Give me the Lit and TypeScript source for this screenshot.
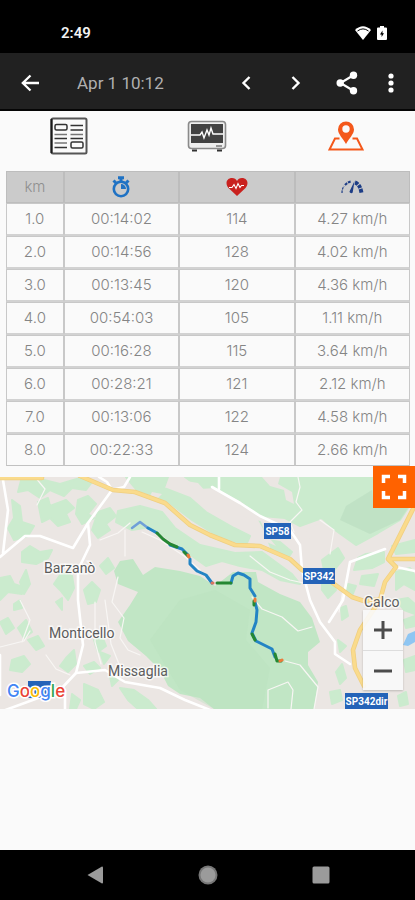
import { LitElement, html, svg, css } from "lit";
import { customElement } from "lit/decorators.js";

const splits = [
  ["1.0", "00:14:02", "114", "4.27 km/h"],
  ["2.0", "00:14:56", "128", "4.02 km/h"],
  ["3.0", "00:13:45", "120", "4.36 km/h"],
  ["4.0", "00:54:03", "105", "1.11 km/h"],
  ["5.0", "00:16:28", "115", "3.64 km/h"],
  ["6.0", "00:28:21", "121", "2.12 km/h"],
  ["7.0", "00:13:06", "122", "4.58 km/h"],
  ["8.0", "00:22:33", "124", "2.66 km/h"],
];

@customElement("status-bar")
class StatusBar extends LitElement {
  static styles = css`
    :host {
      display: flex;
      align-items: center;
      justify-content: space-between;
      box-sizing: border-box;
      height: 53px;
      padding: 12px 28px 0 61px;
      background: #000;
      color: #f2f2f2;
      font: 600 15px/20px Roboto, sans-serif;
    }
    .icons { display: flex; align-items: center; gap: 6px; }
    svg { display: block; }
  `;
  render() {
    return html`
      <span>2:49</span>
      <span class="icons">
        <svg width="16" height="14" viewBox="0 0 16 14">
          <path d="M8 14 0 4Q8-3.500 16 4z" fill="#fff" />
          <path d="M2.500 5Q8 .8 13.500 5" fill="none" stroke="#000" stroke-width="1" />
        </svg>
        <svg width="10" height="14" viewBox="0 0 10 14">
          <path d="M3 0h4v1.500h2a1 1 0 0 1 1 1V13a1 1 0 0 1-1 1H1a1 1 0 0 1-1-1V2.500a1 1 0 0 1 1-1h2z" fill="#fff" />
          <path d="M5.500 4.500 3 8.500h1.600V11L7 7.200H5.500z" fill="#000" />
        </svg>
      </span>
    `;
  }
}

@customElement("tool-bar")
class ToolBar extends LitElement {
  static styles = css`
    :host {
      display: flex;
      align-items: center;
      box-sizing: border-box;
      height: 58px;
      padding: 0 6px;
      background: #212121;
      border-bottom: 2px solid #050505;
    }
    h1 {
      flex: 1;
      margin: 3px 0 0 24px;
      color: #b0b0b0;
      font: 400 17px/24px Roboto, sans-serif;
      white-space: nowrap;
    }
    button {
      display: grid;
      place-items: center;
      width: 50px;
      height: 50px;
      padding: 3px 0 0;
      border: 0;
      background: none;
    }
    .back { width: 47px; }
    .share { width: 52px; }
    .more { width: 36px; }
    svg { display: block; fill: none; stroke: #fff; stroke-width: 2; }
    .solid { fill: #fff; }
  `;
  render() {
    return html`
      <button class="back" aria-label="Back">
        <svg width="18" height="18" viewBox="0 0 18 18"><path d="M18 9H2M9.500 1.500 1.800 9l7.700 7.500" stroke-width="2.300" /></svg>
      </button>
      <h1>Apr 1 10:12</h1>
      <button aria-label="Previous">
        <svg width="10" height="14" viewBox="0 0 10 14"><path d="M8.500 1 2.500 7l6 6" stroke-width="2.400" /></svg>
      </button>
      <button aria-label="Next">
        <svg width="10" height="14" viewBox="0 0 10 14"><path d="M1.500 1l6 6-6 6" stroke-width="2.400" /></svg>
      </button>
      <button class="share" aria-label="Share">
        <svg width="22" height="24" viewBox="0 0 22 24">
          <path d="M17 4.500 4.500 12 17 19.500" stroke-width="2.200" />
          <g class="solid" stroke="none"><circle cx="17.500" cy="4.200" r="3.700" /><circle cx="4.200" cy="12" r="3.700" /><circle cx="17.500" cy="19.800" r="3.700" /></g>
        </svg>
      </button>
      <button class="more" aria-label="More options">
        <svg width="6" height="20" viewBox="0 0 6 20">
          <g class="solid" stroke="none"><circle cx="3" cy="3" r="2.600" /><circle cx="3" cy="10" r="2.600" /><circle cx="3" cy="17" r="2.600" /></g>
        </svg>
      </button>
    `;
  }
}

@customElement("view-tabs")
class ViewTabs extends LitElement {
  static styles = css`
    :host {
      display: grid;
      grid-template-columns: repeat(3, 1fr);
      height: 60px;
    }
    button {
      display: grid;
      place-items: start center;
      padding: 6px 0 0;
      border: 0;
      background: none;
    }
    svg { display: block; }
  `;
  render() {
    return html`
      <button aria-label="Summary">
        <svg width="38" height="38" viewBox="0 0 38 38" fill="none" stroke="#333">
          <rect x="1.500" y="1.500" width="35" height="35" rx="1.500" stroke="#555" stroke-width="2" />
          <path d="M1.500 2v34" stroke="#1a1a1a" stroke-width="2" />
          <rect x="5" y="7.500" width="12" height="5.500" rx="1.500" stroke-width="1.500" />
          <rect x="21" y="25" width="12" height="6" rx="1.500" stroke-width="1.500" />
          <path d="M20.500 8.500h12.500M20.500 13h12.500M4.500 21.500H17M20.500 21.500H33M4.500 30.500H17" stroke-width="1.400" />
          <path d="M4.500 17.500H17M20.500 17.500H33M4.500 26H17" stroke="#777" stroke-width="1.400" />
        </svg>
      </button>
      <button aria-label="Heart rate chart">
        <svg width="40" height="38" viewBox="0 0 40 38">
          <rect x="1.500" y="4.500" width="37" height="27" rx="3" fill="#eee" stroke="#8a8a8a" stroke-width="1.600" />
          <rect x="4" y="7" width="32" height="19" fill="#424242" />
          <path d="M4 18h9l2-3 2 6 3-8 2 5 2-7 2 6h10" fill="none" stroke="#fff" stroke-width="1.400" />
          <path d="M5 32.500h5v2H5zM30 32.500h5v2h-5z" fill="#333" />
          <path d="M29 29h6" stroke="#777" stroke-width="1.500" />
        </svg>
      </button>
      <button aria-label="Map">
        <svg width="38" height="38" viewBox="0 0 38 38" fill="none" stroke="#f4581b">
          <path d="M12.500 21.500H8L2.500 32.500h33L30 21.500h-4.500" stroke-width="2" />
          <path d="M19 27C16 21.500 11 17 11 12.500a8 8 0 0 1 16 0C27 17 22 21.500 19 27z" fill="#f4581b" stroke="none" />
          <circle cx="19" cy="12" r="3.700" fill="#fafafa" stroke="none" />
        </svg>
      </button>
    `;
  }
}

@customElement("split-table")
class SplitTable extends LitElement {
  static styles = css`
    :host { display: block; padding: 0 5px 0 6px; }
    table {
      width: 100%;
      table-layout: fixed;
      border-collapse: separate;
      border-spacing: 0;
      color: #858585;
      font: 300 15px/20px Inter, sans-serif;
      text-align: center;
    }
    col:first-child { width: 14.300%; }
    th, td {
      box-sizing: border-box;
      padding: 0;
      border: 1px solid #c8c8c8;
      font-weight: 300;
    }
    th { height: 32px; padding: 0; background: #cbcbcb; color: #8f8f8f; border-color: #bdbdbd; }
    td { height: 33px; border-bottom: 2px solid #d2d2d2; }
    tr:last-child td { height: 32px; border-bottom: 1px solid #c1c1c1; }
    svg { display: block; margin: 0 auto; }
  `;
  render() {
    return html`
      <table>
        <colgroup><col /><col /><col /><col /></colgroup>
        <thead>
          <tr>
            <th scope="col">km</th>
            <th scope="col" aria-label="Time">
              <svg width="20" height="22" viewBox="0 0 20 22" fill="none" stroke="#1f72c4">
                <circle cx="10" cy="13" r="7.200" stroke-width="2.600" />
                <path d="M7 1.800h6M10 2v4M2.500 4.500l3 3M17.500 4.500l-3 3" stroke-width="3" />
                <path d="M10 13V8a5 5 0 0 1 5 5z" fill="#1f72c4" stroke="none" />
              </svg>
            </th>
            <th scope="col" aria-label="Heart rate">
              <svg width="22" height="18" viewBox="0 0 22 18">
                <path d="M11 18 2.500 10C-1.500 5 1 0 6 0c2.500 0 4 1.200 5 3 1-1.800 2.500-3 5-3 5 0 7.500 5 3.500 10z" fill="#c9211e" />
                <path d="M3 9.500h3l2-3 2 4 2-5 2 4 1.500-2H18" fill="none" stroke="#fff" stroke-width="1.100" />
              </svg>
            </th>
            <th scope="col" aria-label="Speed">
              <svg width="24" height="14" viewBox="0 0 24 14" fill="none" stroke="#1d3d86">
                <path d="M2 13c0-3 .7-5 2-7" stroke-width="1.200" stroke-dasharray="2.500 1" />
                <path d="M5 5Q8 2 11 1.600" stroke-width="2.200" stroke-dasharray="2.800 1" />
                <path d="M15 2.500Q20 4 21.500 13" stroke-width="4" stroke-dasharray="3.500 1" />
                <path d="M14.500 1 9.500 11.500a1.800 1.800 0 0 0 3.200 1z" fill="#1d3d86" stroke="none" />
              </svg>
            </th>
          </tr>
        </thead>
        <tbody>
          ${splits.map((row) => html`<tr>${row.map((cell) => html`<td>${cell}</td>`)}</tr>`)}
        </tbody>
      </table>
    `;
  }
}

const forest =
  "M120 561 133 559 143 575 155 567 180 571 200 576 215 586 233 572 256 572 258 582 280 594 300 602 312 618 320 642 308 652 308 665 318 682 314 709 214 709 200 698 180 694 168 686 160 670 146 656 128 641 118 622 130 605 138 592 118 584 114 571z";
const woods = [
  "M118 511 140 506 162 512 175 528 200 545 235 553 262 552 292 574 300 584 280 580 262 570 240 566 222 561 206 566 192 556 170 540 150 527 132 530 116 522z",
  "M126 477 168 477 164 488 190 498 206 512 234 528 250 536 246 545 216 535 192 520 166 500 136 489z",
  "M185 477 372 477 374 507 408 508 400 520 378 533 356 545 335 530 322 518 300 526 285 518 262 516 240 500 215 487 200 488z",
  "M22 477 40 479 60 484 80 478 92 482 86 490 72 488 64 496 50 490 40 498 28 490 18 492z",
  "M38 502 48 498 50 506 66 500 74 508 66 514 70 522 58 526 50 518 42 522z",
  "M12 500 20 506 22 522 34 526 28 536 14 540 8 528 14 518z",
  "M78 500 88 496 96 504 88 514 94 518 82 524 76 514z",
  "M98 512 110 508 116 516 106 524 110 530 98 538 92 530z",
  "M22 552 30 546 40 552 52 550 48 558 36 564 22 562z",
  "M0 578 10 576 14 584 26 588 22 594 8 592 0 600z",
  "M20 582 26 570 30 584 24 594z",
  "M62 572 72 576 74 588 68 600 60 590 54 584z",
  "M84 590 92 582 100 590 96 602 88 604z",
  "M100 566 108 558 114 568 106 574z",
  "M14 604 20 600 22 608 14 610zM56 602 62 598 62 610zM0 622 8 618 14 628 6 634z",
  "M18 628 26 620 32 632 24 638zM28 640 38 636 44 646 36 650z",
  "M66 658 74 650 76 664 68 672 60 666z",
  "M12 660 24 656 30 664 22 672 10 670z",
  "M94 640 102 636 106 646 98 652zM100 652 110 656 104 664z",
  "M84 666 94 662 100 668 90 674zM84 684 98 690 104 702 94 709 84 704z",
  "M120 688 134 690 148 700 156 709 138 709 128 700z",
  "M72 694 80 700 76 709 70 709zM110 676 118 680 112 686z",
  "M268 540 280 542 292 552 288 558 272 550zM250 520 260 522 264 532 254 530z",
  "M322 560 338 548 344 558 334 570 324 570z",
  "M366 554 384 552 384 562 372 568 354 570 358 558z",
  "M362 576 378 574 374 586 360 584zM348 584 356 586 352 596 346 592z",
  "M392 546 415 540 415 552 396 554z",
  "M396 572 410 568 415 576 415 590 404 584 396 590z",
  "M396 600 408 598 415 604 415 614 404 610z",
  "M322 582 332 578 336 590 328 598 322 590z",
  "M341 608 346 606 348 616 342 620zM338 640 346 646 340 652z",
  "M336 672 342 664 346 678 340 684zM330 692 340 690 342 700 332 704z",
  "M404 620 415 616 415 626 406 628zM404 660 415 656 415 670 406 672zM398 696 406 692 408 704 400 706z",
];
const clearings = [
  "M262 477 280 477 278 484 292 492 294 504 286 500 284 490 270 486z",
  "M240 516 258 520 266 534 276 546 262 540 250 534z",
  "M306 530 318 524 330 532 334 546 322 552 312 544z",
  "M186 481 198 483 206 492 196 492z",
  "M152 492 162 494 158 498 150 496z",
];
const lanes = [
  "M112 490l-5-8-8-5M112 490l12-3 6-10M88 523l2 22-12 25v30l5 45-7 28-16 17-60 22",
  "M3 480l5 30-5 43M0 557l25-21h15l33 12 15-25 24-33",
  "M76 673l29-3 20 12 35 6 25 12 25 10",
  "M212 487l28 16 20 13 30 14 10 15 2 25 8 30 10 22 15 20v12l15 10",
  "M219 477v12M329 622l14-22 7-38 35-13M396 567l19 4",
  "M0 655v40M65 690v19",
];
const trails = [
  "M20 600l10 20-8 22M0 647l24-6 6-10M100 540l18-7 12-10M46 655l10 14 14 6",
  "M118 577l-6 25 12 16-4 20 8 12 12 5M95 602v40l6 22M105 600l6 44 8 20",
  "M252 597l10 12 20 8 16 14 14-4M268 708v-18l20-8 5 8-2 19M285 661l15 4 18 22-4 22",
  "M298 477l2 10-4 15 6 8-12 12 4 10M320 520l14 10-4 24M343 590l-4 22M200 570l-16-14-24-16-18-8",
  "M35 477l10 12-8 16M125 530v26M250 556l20 16 20 8 18 4",
];
const highway =
  "M0 478h42M80 476l33 14 22 2 30 11 25 22 20 10 25 10 25 1 30 13 12 11 28 11 22 16 12 4 18-2M413 509l-25 50 8 8-11 15-5 18-20 30-7 20 2 18 9 18M388 559h27";

@customElement("route-map")
class RouteMap extends LitElement {
  static styles = css`
    :host { display: block; position: relative; height: 232px; }
    .map { display: block; width: 100%; height: 232px; background: #ebe6e3; }
    .place { font: 400 14px Roboto, sans-serif; fill: #5c5c5c; stroke: #fff; stroke-width: 3px; stroke-opacity: 0.7; paint-order: stroke; }
    .road { font: 700 10px Roboto, sans-serif; fill: #fff; text-anchor: middle; }
    .brand { font: 500 17px Inter, sans-serif; stroke: #fff; stroke-width: 3px; paint-order: stroke; }
    button { display: grid; place-items: center; padding: 0; border: 0; }
    svg { display: block; }
    .full { position: absolute; top: -11px; right: 0; width: 42px; height: 42px; background: #ff6200; }
    .zoom {
      position: absolute;
      right: 12px;
      bottom: 19px;
      width: 40px;
      background: #fafafae6;
      box-shadow: 0 1px 2px #0003;
    }
    .zoom button { width: 40px; height: 40px; background: none; }
    .zoom button + button { border-top: 1px solid #ddd; }
  `;
  render() {
    const badge = (x: number, y: number, w: number, label: string) => svg`
      <rect x=${x} y=${y} width=${w} height="16" fill="#2463b8" />
      <text class="road" x=${x + w / 2} y=${y + 12}>${label}</text>`;
    return html`
      <svg class="map" viewBox="0 477 415 232" preserveAspectRatio="xMidYMid slice" role="img" aria-label="Route map">
        <g fill="#cbebce" stroke="#cbebce" stroke-width="2" stroke-linejoin="round">${woods.map((d) => svg`<path d=${d} />`)}</g>
        <path d=${forest} fill="#c1e6c5" />
        <path d="M150 640 180 600 215 590 250 610 246 640 270 668 262 709 214 709 180 690z" fill="#b9e0bd" opacity=".4" />
        <path d="M340 520 346 506 372 490 374 507 408 508 400 520 370 534z" fill="#b9dcbf" opacity=".6" />
        <g fill="#ebe6e3">${clearings.map((d) => svg`<path d=${d} />`)}</g>
        <path d="M403 645 408 634 415 631 415 642 408 646z" fill="#8fc6f2" />
        <g fill="none" stroke-linejoin="round" stroke-linecap="round">
          <g stroke="#f8f6f4" stroke-width="1.200">${trails.map((d) => svg`<path d=${d} />`)}</g>
          <g stroke="#fff" stroke-width="2.600">${lanes.map((d) => svg`<path d=${d} />`)}</g>
          <path d=${highway} stroke="#f0cf80" stroke-width="4.600" />
          <path d=${highway} stroke="#fadb8c" stroke-width="3" />
          <g stroke-width="3">
            <path d="M132 528l8-6 8 6" stroke="#6f9fd8" stroke-width="2.500" />
            <path d="M148 528l9 5M170 545l12 4 6 6M190 559l0 5 7 7 9 4 6 8M231 583l2-7 5-3 6 2 6 4v9l5 8M255 602l2 8-1 12-4 11 4 8 16 8 3 8" stroke="#2384c4" />
            <path d="M157 533l6 6 7 5 7 3M184 552l4 4M217 583h14M254 605v-4M252 634l3 6M275 654l2 7 4 0" stroke="#258733" />
            <path d="M188 555l1 2M255 599v2M280 661l2-1" stroke="#ed7a3a" />
            <path d="M212 583h1" stroke="#d9755f" />
          </g>
        </g>
        <text class="place" x="44" y="573">Barzanò</text>
        <text class="place" x="49" y="638">Monticello</text>
        <text class="place" x="108" y="676">Missaglia</text>
        <text class="place" x="364" y="607">Calco</text>
        ${badge(264, 523, 27, "SP58")} ${badge(303, 568, 32, "SP342")} ${badge(345, 693, 43, "SP342dir")}
        <rect x="28" y="681" width="23" height="17" fill="#2463b8" />
        <text class="brand" x="7" y="697"><tspan fill="#4285f4">G</tspan><tspan fill="#ea4335">o</tspan><tspan fill="#fbbc05">o</tspan><tspan fill="#4285f4">g</tspan><tspan fill="#34a853">l</tspan><tspan fill="#ea4335">e</tspan></text>
      </svg>
      <button class="full" aria-label="Full screen">
        <svg width="26" height="26" viewBox="0 0 26 26" fill="none" stroke="#fff" stroke-width="3.500">
          <path d="M2.500 9V2.500H9M17 2.500h6.500V9M23.500 17v6.500H17M9 23.500H2.500V17" />
        </svg>
      </button>
      <div class="zoom">
        <button aria-label="Zoom in">
          <svg width="18" height="18" viewBox="0 0 18 18" stroke="#4c4c4c" stroke-width="3"><path d="M0 9h18M9 0v18" /></svg>
        </button>
        <button aria-label="Zoom out">
          <svg width="18" height="18" viewBox="0 0 18 18" stroke="#4c4c4c" stroke-width="3"><path d="M0 9h18" /></svg>
        </button>
      </div>
    `;
  }
}

@customElement("system-nav")
class SystemNav extends LitElement {
  static styles = css`
    :host {
      display: flex;
      justify-content: center;
      height: 50px;
      background: #000;
    }
    button {
      display: grid;
      place-items: center;
      width: 113px;
      padding: 0;
      border: 0;
      background: none;
    }
    svg { display: block; fill: #9b9b9b; }
  `;
  render() {
    return html`
      <button aria-label="Back"><svg width="16" height="18" viewBox="0 0 16 18"><path d="M.5 9 15 .5q1 0 1 1v15q0 1-1 1z" /></svg></button>
      <button aria-label="Home"><svg width="20" height="20" viewBox="0 0 20 20"><circle cx="10" cy="10" r="9.500" fill="#777" /><circle cx="10" cy="10" r="7.500" /></svg></button>
      <button aria-label="Recent apps"><svg width="18" height="18" viewBox="0 0 18 18"><rect x=".5" y=".5" width="17" height="17" rx="1.500" /></svg></button>
    `;
  }
}

@customElement("app-root")
class AppRoot extends LitElement {
  static styles = css`
    :host {
      display: flex;
      flex-direction: column;
      min-height: 100vh;
      background: #fafafa;
    }
    main {
      display: flex;
      flex: 1;
      flex-direction: column;
    }
    route-map { margin-top: 11px; }
  `;
  render() {
    return html`
      <status-bar></status-bar>
      <tool-bar></tool-bar>
      <main>
        <view-tabs></view-tabs>
        <split-table></split-table>
        <route-map></route-map>
      </main>
      <system-nav></system-nav>
    `;
  }
}
